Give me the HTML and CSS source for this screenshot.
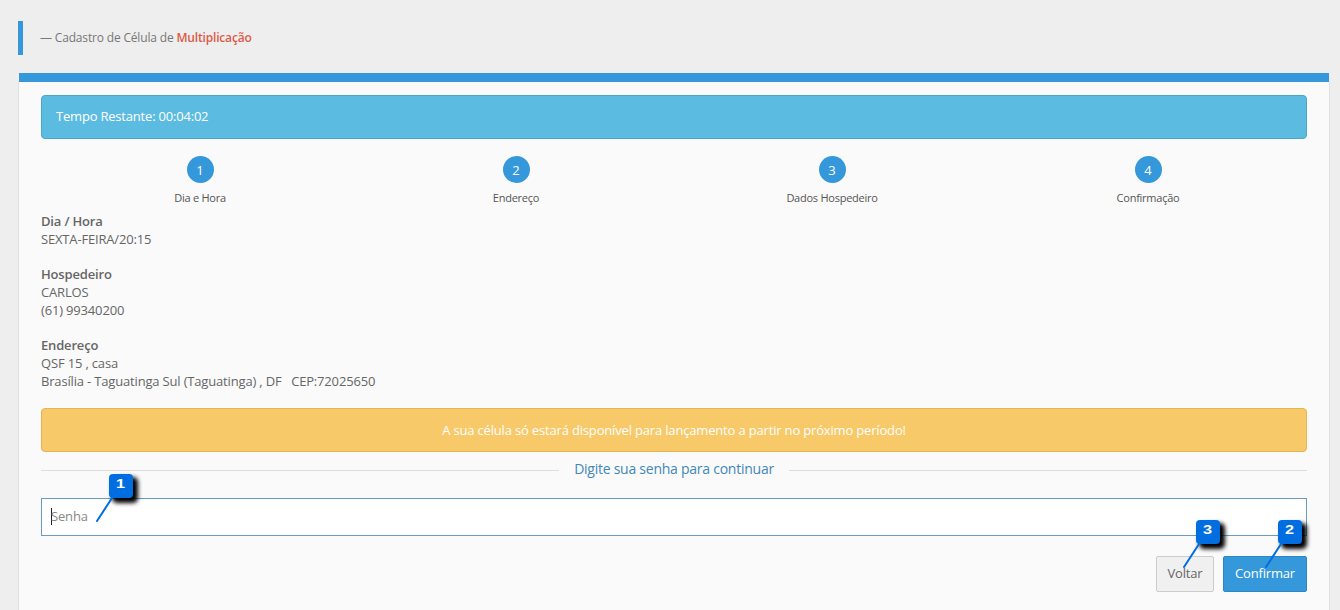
FILE: index.html
```html
<!DOCTYPE html>
<html lang="pt-BR">
<head>
<meta charset="utf-8">
<title>Cadastro de Célula</title>
<link rel="stylesheet" href="styles.css">
</head>
<body>
<header class="page-title"><span class="title-text">— Cadastro de Célula de <strong>Multiplicação</strong></span></header>
<main class="panel">
  <div class="alert alert-info"><span>Tempo Restante: 00:04:02</span></div>
  <ol class="steps">
    <li class="step"><span class="step-number">1</span><span class="step-label">Dia e Hora</span></li>
    <li class="step"><span class="step-number">2</span><span class="step-label">Endereço</span></li>
    <li class="step"><span class="step-number">3</span><span class="step-label">Dados Hospedeiro</span></li>
    <li class="step"><span class="step-number">4</span><span class="step-label">Confirmação</span></li>
  </ol>
  <section class="details">
    <div class="group"><b>Dia / Hora</b><span>SEXTA-FEIRA/20:15</span></div>
    <div class="group"><b>Hospedeiro</b><span>CARLOS</span><span>(61) 99340200</span></div>
    <div class="group"><b>Endereço</b><span>QSF 15 , casa</span><span>Brasília - Taguatinga Sul (Taguatinga) , DF &nbsp; CEP:72025650</span></div>
  </section>
  <div class="alert alert-warning"><span>A sua célula só estará disponível para lançamento a partir no próximo período!</span></div>
  <div class="divider"><span>Digite sua senha para continuar</span></div>
  <div class="field">
    <span class="caret"></span><span class="placeholder">Senha</span>
    <div class="marker marker-field"><span class="marker-box"><span class="marker-digit">1</span></span><svg class="marker-line" width="20" height="26" viewBox="0 0 20 26"><path d="M17 1L2 24"/></svg></div>
  </div>
  <div class="actions">
    <div class="button button-default"><span>Voltar</span>
      <div class="marker marker-back"><span class="marker-box"><span class="marker-digit">3</span></span><svg class="marker-line" width="20" height="26" viewBox="0 0 20 26"><path d="M17 1L2 24"/></svg></div>
    </div>
    <div class="button button-primary"><span>Confirmar</span>
      <div class="marker marker-confirm"><span class="marker-box"><span class="marker-digit">2</span></span><svg class="marker-line" width="20" height="26" viewBox="0 0 20 26"><path d="M17 1L2 24"/></svg></div>
    </div>
  </div>
</main>
</body>
</html>
```
FILE: styles.css
```css
* { box-sizing: border-box; }
body {
  margin: 0;
  height: 610px;
  padding: 21px 11px 0 18px;
  overflow: hidden;
  background: #eee;
  color: #666;
  font: 13px/17.78px "Open Sans", "Noto Sans", sans-serif;
  letter-spacing: -0.17px;
}
.page-title {
  height: 34px;
  padding-left: 17px;
  border-left: 5px solid #3598db;
  font-size: 12px;
  line-height: 34px;
  color: #777;
}
.page-title strong { color: #dd5b48; font-weight: 600; }
.panel {
  height: 560px;
  margin: 18px 0 0 1px;
  padding: 13px 22px 0;
  border-top: 9px solid #3598db;
  background: #fafafa;
  box-shadow: 0 9px 0 1px #e0e0e0;
}
.alert {
  display: flex;
  align-items: center;
  height: 44px;
  padding: 0 14px;
  border: 1px solid;
  border-radius: 4px;
  color: #fff;
}
.alert-info { background: #5cbbe0; border-color: #4ba7c8; font-weight: 500; letter-spacing: -0.2px; }
.alert-warning { justify-content: center; padding-top: 2px; background: #f8c969; border-color: #e5b453; }
.steps {
  display: grid;
  grid-template-columns: repeat(4, 316px);
  margin: 17px 0 0;
  padding: 0;
  list-style: none;
}
.step { display: flex; flex-direction: column; align-items: center; padding-left: 2px; }
.step-number {
  width: 27px;
  height: 27px;
  border-radius: 50%;
  background: #3598db;
  color: #fff;
  line-height: 28px;
  text-align: center;
}
.step-label { margin-top: 7px; font-size: 11px; line-height: 16px; letter-spacing: -0.25px; color: #555; }
.details { display: flex; flex-direction: column; gap: 17.78px; margin-top: 7px; }
.group { display: flex; flex-direction: column; }
.group b { font-weight: 600; }
.details + .alert { margin-top: 17px; }
.divider {
  display: flex;
  align-items: center;
  gap: 15px;
  height: 34px;
  color: #4288b8;
  font-size: 14px;
  letter-spacing: -0.25px;
}
.divider::before, .divider::after { content: ""; flex: 1; height: 1px; margin-top: 3px; background: #ddd; }
.field {
  position: relative;
  display: flex;
  align-items: center;
  height: 38px;
  margin-top: 12px;
  padding-left: 9px;
  border: 1px solid #699bc3;
  background: #fff;
  color: #888;
}
.caret { width: 1px; height: 17px; margin-right: -1px; background: #222; }
.actions { display: flex; justify-content: flex-end; gap: 9px; margin-top: 20px; }
.button {
  position: relative;
  display: flex;
  align-items: center;
  justify-content: center;
  height: 36px;
  border: 1px solid;
  border-radius: 2px;
}
.button-default { width: 58px; background: #f0f0f0; border-color: #ccc; }
.button-primary { width: 84px; background: #3598db; border-color: #2d87c5; color: #fff; }
.marker { position: absolute; width: 24px; height: 24px; }
.marker-field { left: 67px; top: -25px; }
.marker-back { left: 39px; top: -37px; }
.marker-confirm { left: 54px; top: -37px; }
.marker-box {
  display: flex;
  justify-content: center;
  height: 24px;
  border-radius: 4px;
  background: #006ee0;
  box-shadow: 4px 4px 4px 1px #000;
  color: #fff;
  font: bold 13px/20px "Liberation Sans", sans-serif;
  letter-spacing: 0;
}
.marker-digit { transform: scaleX(1.25); }
.marker-line { position: absolute; left: -14px; top: 23px; fill: none; stroke: #006ee0; stroke-width: 2; stroke-linecap: round; }
```
